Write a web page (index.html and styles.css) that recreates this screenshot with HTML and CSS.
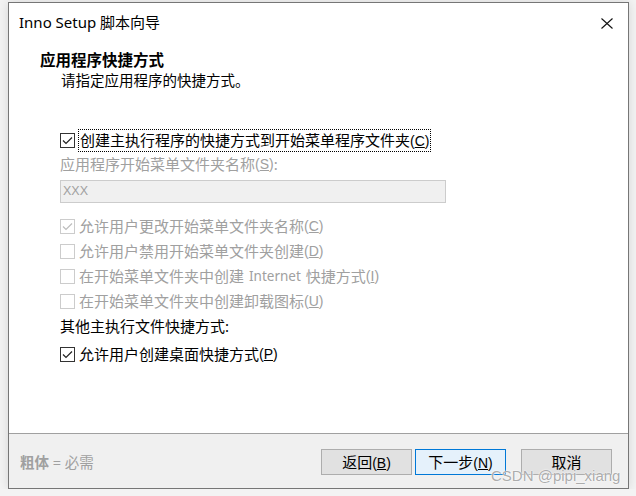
FILE: index.html
```html
<!DOCTYPE html><html><head><meta charset="utf-8"><meta name="viewport" content="width=device-width">
<title>Inno Setup 脚本向导</title>
<link rel="stylesheet" href="styles.css">
</head>
<body>

<div class="win">
	<div class="titlebar">
		<span class="title">Inno Setup 脚本向导</span>
		<svg class="close" width="12" height="11" viewBox="0 0 12 11"><path d="M0.5 0.5L11.5 10.5M11.5 0.5L0.5 10.5" stroke="#111" stroke-width="1.1" fill="none"/></svg>
	</div>

	<div class="head">
		<div class="head-title">应用程序快捷方式</div>
		<div class="head-sub">请指定应用程序的快捷方式。</div>
	</div>

	<div class="page">
		<div class="row r-first"><span class="box"><svg width="13" height="13" viewBox="0 0 13 13"><path d="M2 6.5L5 9.5L11 3.5" stroke="#222" stroke-width="1.2" fill="none"/></svg></span><span class="focus">创建主执行程序的快捷方式到开始菜单程序文件夹<span class="key">(<u>C</u>)</span></span></div>
		<div class="row r-label off">应用程序开始菜单文件夹名称<span class="key">(<u>S</u>)</span>:</div>
		<div class="field">XXX</div>
		<div class="row r-opt off"><span class="box dim"><svg width="13" height="13" viewBox="0 0 13 13"><path d="M2 6.5L5 9.5L11 3.5" stroke="#bdbdbd" stroke-width="1.2" fill="none"/></svg></span>允许用户更改开始菜单文件夹名称<span class="key">(<u>C</u>)</span></div>
		<div class="row r-opt off"><span class="box dim"></span>允许用户禁用开始菜单文件夹创建<span class="key">(<u>D</u>)</span></div>
		<div class="row r-opt off"><span class="box dim"></span>在开始菜单文件夹中创建<span class="lat">Internet</span>快捷方式<span class="key">(<u>I</u>)</span></div>
		<div class="row r-opt off"><span class="box dim"></span>在开始菜单文件夹中创建卸载图标<span class="key">(<u>U</u>)</span></div>
		<div class="row r-other">其他主执行文件快捷方式:</div>
		<div class="row r-desk"><span class="box"><svg width="13" height="13" viewBox="0 0 13 13"><path d="M2 6.5L5 9.5L11 3.5" stroke="#222" stroke-width="1.2" fill="none"/></svg></span>允许用户创建桌面快捷方式<span class="key">(<u>P</u>)</span></div>
	</div>

	<div class="foot">
		<span class="hint"><b>粗体</b> = 必需</span>
		<button class="btn btn-back">返回<span class="key">(<u>B</u>)</span></button>
		<button class="btn btn-next">下一步<span class="key">(<u>N</u>)</span></button>
		<button class="btn btn-cancel">取消</button>
	</div>
</div>

<div class="mark">CSDN @pipi_xiang</div>

</body>
</html>
```

FILE: styles.css
```css
body {
	margin: 0;
	background: #f3f3f3;
	font-family: "Noto Sans", "Noto Sans CJK SC", sans-serif;
	font-size: 15px;
	color: #000;
}
.win {
	margin: 2px 0 0 8px;
	width: 619px;
	height: 485px;
	border: 1px solid #767676;
	background: #fff;
	display: flex;
	flex-direction: column;
	box-shadow: 0 0 10px rgba(0, 0, 0, .12);
}
.titlebar {
	height: 38px;
	display: flex;
	align-items: center;
	padding: 0 15px 0 10px;
}
.title {
	flex: 1;
	font-size: 15px;
	line-height: 20px;
}
.close {
	margin-top: 2px;
}
.head {
	padding: 9px 0 0 31px;
	line-height: 20px;
}
.head-title {
	font-weight: bold;
	font-size: 15.5px;
}
.head-sub {
	padding-left: 21px;
	font-size: 14.5px;
}
.page {
	padding: 40px 0 0 51px;
	line-height: 20px;
}
.row {
	display: flex;
	align-items: center;
	height: 20px;
	white-space: nowrap;
}
.box {
	box-sizing: border-box;
	width: 15px;
	height: 15px;
	border: 1px solid #333;
	margin-right: 4px;
	display: flex;
	align-items: center;
	justify-content: center;
	flex: none;
}
.box.dim {
	border-color: #cccccc;
}
.focus {
	outline: 1px dotted #000;
	outline-offset: 0;
	padding: 0 1px;
}
.key {
	font-family: "Liberation Sans", "Noto Sans", sans-serif;
	font-size: 14px;
}
.lat {
	font-family: "Noto Sans", sans-serif;
	font-size: 13.5px;
	margin: 0 5px;
}
.off {
	color: #a0a0a0;
}
.r-label {
	margin-top: 4px;
}
.field {
	margin-top: 6px;
	box-sizing: border-box;
	width: 386px;
	height: 23px;
	border: 1px solid #cccccc;
	background: #f0f0f0;
	color: #a0a0a0;
	font-family: "Liberation Sans", sans-serif;
	font-size: 12.5px;
	line-height: 21px;
	padding-left: 2px;
}
.r-opt {
	margin-bottom: 5px;
}
.field + .r-opt {
	margin-top: 13px;
}
.r-desk {
	margin-top: 8px;
}
.foot {
	margin-top: auto;
	box-sizing: border-box;
	height: 55px;
	border-top: 1px solid #a0a0a0;
	background: #f0f0f0;
	display: flex;
	align-items: flex-start;
	padding: 15px 16px 0 11px;
}
.hint {
	flex: 1;
	line-height: 26px;
	color: #a0a0a0;
	font-size: 14.5px;
}
.btn {
	box-sizing: border-box;
	width: 91px;
	height: 26px;
	border: 1px solid #adadad;
	background: #e1e1e1;
	font-family: "Noto Sans", "Noto Sans CJK SC", sans-serif;
	font-size: 15px;
	color: #000;
	padding: 0;
	line-height: 22px;
}
.btn-next {
	margin-left: 3px;
	border-color: #0078d7;
	background: #e5f1fb;
}
.btn-cancel {
	margin-left: 15px;
}
.mark {
	position: absolute;
	left: 491px;
	top: 467px;
	white-space: nowrap;
	font-family: "Liberation Sans", sans-serif;
	font-size: 15px;
	line-height: 18px;
	color: rgba(150, 150, 150, .8);
	text-shadow: 0 0 2px #fff, 0 0 1px #fff;
}
```
